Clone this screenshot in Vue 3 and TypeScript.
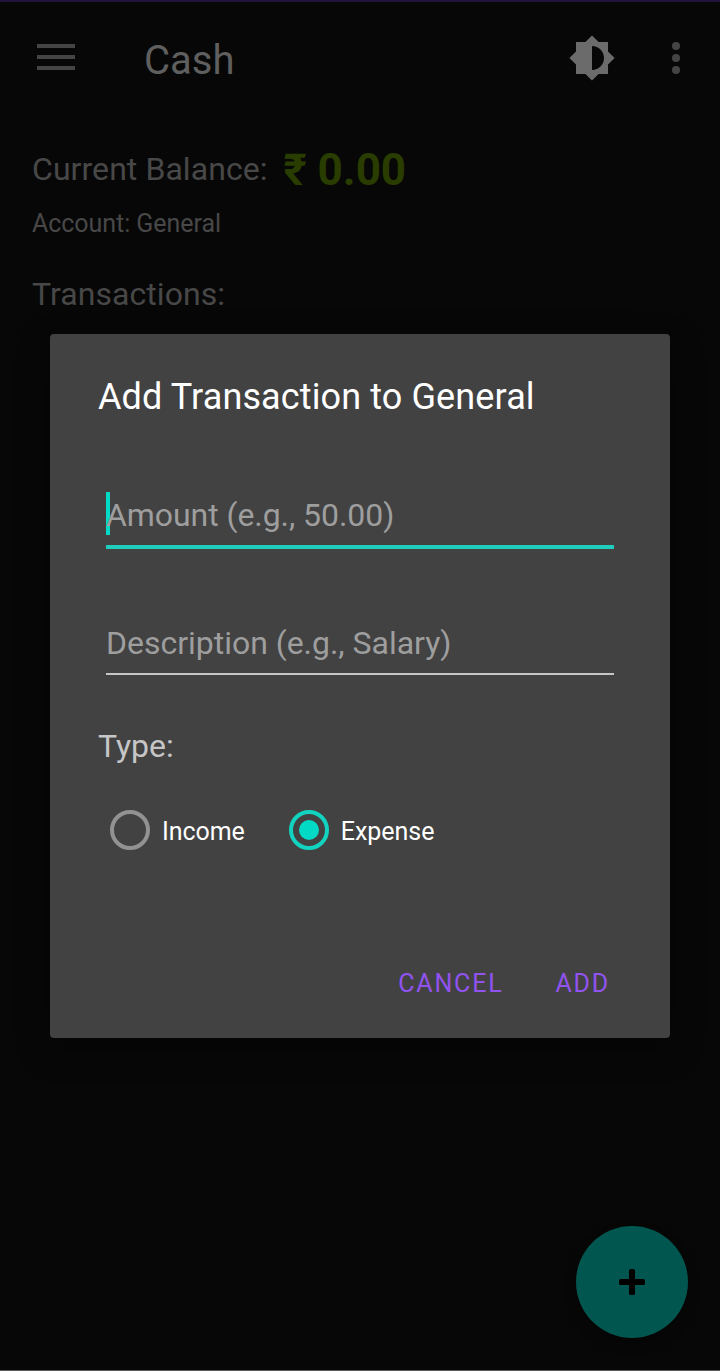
<script setup lang="ts">
import { ref } from 'vue'

type Kind = 'Income' | 'Expense'

const kinds: Kind[] = ['Income', 'Expense']
const selected = ref<Kind>('Expense')
const amount = ref('')
const description = ref('')
</script>

<template>
  <div class="screen">
    <header class="toolbar">
      <svg class="menu" width="38" height="26" viewBox="0 0 38 26">
        <path d="M0 0h38v4H0zM0 11h38v4H0zM0 22h38v4H0z" />
      </svg>
      <h1 class="title">Cash</h1>
      <svg class="theme" width="48" height="48" viewBox="0 0 24 24">
        <path d="M20 15.31L23.31 12 20 8.69V4h-4.69L12 .69 8.69 4H4v4.69L.69 12 4 15.31V20h4.69L12 23.31 15.31 20H20v-4.69zM12 18V6c3.31 0 6 2.69 6 6s-2.69 6-6 6z" />
      </svg>
      <svg class="more" width="8" height="32" viewBox="0 0 8 32">
        <circle cx="4" cy="4" r="4" />
        <circle cx="4" cy="16" r="4" />
        <circle cx="4" cy="28" r="4" />
      </svg>
    </header>

    <main class="content">
      <div class="balance">
        <span class="balance-label">Current Balance:</span>
        <strong class="balance-value">₹ 0.00</strong>
      </div>
      <p class="account">Account: General</p>
      <h2 class="section">Transactions:</h2>
    </main>

    <button class="fab" aria-label="Add">
      <svg width="26" height="26" viewBox="0 0 26 26">
        <rect x="10" y="0" width="6" height="26" rx="1.5" />
        <rect x="0" y="10" width="26" height="6" rx="1.5" />
      </svg>
    </button>

    <div class="overlay">
      <form class="dialog" @submit.prevent>
        <h2 class="dialog-title">Add Transaction to General</h2>
        <div class="field focused">
          <i class="caret"></i>
          <input v-model="amount" placeholder="Amount (e.g., 50.00)" />
        </div>
        <div class="field">
          <input v-model="description" placeholder="Description (e.g., Salary)" />
        </div>
        <p class="type">Type:</p>
        <div class="options">
          <div
            v-for="kind in kinds"
            :key="kind"
            class="option"
            :class="{ on: kind === selected }"
            @click="selected = kind"
          >
            <span class="ring"></span>
            <span class="option-label">{{ kind }}</span>
          </div>
        </div>
        <div class="actions">
          <button type="button">CANCEL</button>
          <button type="submit">ADD</button>
        </div>
      </form>
    </div>
  </div>
</template>

<style>
body {
  margin: 0;
  background: #070707;
}
</style>

<style scoped>
.screen {
  box-sizing: border-box;
  position: relative;
  width: 720px;
  height: 1371px;
  overflow: hidden;
  background: #070707;
  border-top: 2px solid #20133d;
  border-bottom: 1px solid #5c585a;
  font-family: Roboto, "Liberation Sans", sans-serif;
}

h1,
h2,
p {
  margin: 0;
  font-weight: 400;
}

button {
  padding: 0;
  border: 0;
  background: none;
  font-family: inherit;
}

svg {
  display: block;
}

.toolbar {
  display: flex;
  align-items: center;
  box-sizing: border-box;
  height: 112px;
  padding: 0 40px 0 37px;
}

.menu {
  margin-right: 69px;
  margin-top: -2px;
  fill: #444;
}

.title {
  flex: 1;
  padding-top: 6px;
  color: #5f5f5f;
  font-size: 40px;
  line-height: 48px;
}

.theme {
  margin-right: 56px;
  fill: #6b6b6b;
}

.more {
  fill: #444;
}

.content {
  padding: 29px 32px 0;
  color: #484848;
}

.balance {
  display: flex;
  align-items: center;
  gap: 16px;
  height: 52px;
}

.balance-label {
  font-size: 32px;
  letter-spacing: 0.06px;
}

.balance-value {
  padding-top: 2px;
  color: #2a3d00;
  font-size: 44px;
  font-weight: 700;
}

.account {
  margin-top: 13px;
  font-size: 25px;
  line-height: 32px;
  letter-spacing: -0.05px;
}

.section {
  margin-top: 34px;
  font-size: 32px;
  line-height: 40px;
  letter-spacing: 0.06px;
}

.fab {
  position: absolute;
  right: 32px;
  bottom: 32px;
  display: flex;
  align-items: center;
  justify-content: center;
  width: 112px;
  height: 112px;
  border-radius: 50%;
  background: #01574f;
  box-shadow: 0 6px 12px rgba(0, 0, 0, 0.3);
}

.overlay {
  position: absolute;
  inset: 0;
  padding: 332px 50px 0;
}

.dialog {
  box-sizing: border-box;
  height: 704px;
  padding: 39px 48px 0;
  border-radius: 4px;
  background: #424242;
  box-shadow: 0 12px 32px rgba(0, 0, 0, 0.35);
}

.dialog-title {
  color: #fff;
  font-size: 36px;
  line-height: 48px;
  letter-spacing: 0.12px;
}

.field {
  position: relative;
  box-sizing: border-box;
  height: 54px;
  margin: 72px 8px 0;
  border-bottom: 2px solid #c6c6c6;
}

.field.focused {
  height: 56px;
  border-bottom: 4px solid #20cdbc;
}

.field input {
  display: block;
  width: 100%;
  height: 44px;
  padding: 0;
  border: 0;
  outline: 0;
  background: none;
  color: #fff;
  font: 32px/44px Roboto, "Liberation Sans", sans-serif;
  letter-spacing: -0.02px;
}

.field input::placeholder {
  color: #9e9e9e;
  opacity: 1;
}

.field.focused input {
  position: relative;
  letter-spacing: -0.06px;
}

.caret {
  position: absolute;
  left: 0;
  top: -1px;
  width: 4px;
  height: 43px;
  background: #03dac5;
}

.type {
  margin-top: 51px;
  color: #c6c6c6;
  font-size: 32px;
  line-height: 40px;
}

.options {
  display: flex;
  gap: 44px;
  margin: 44px 12px 0;
}

.option {
  display: flex;
  align-items: center;
  gap: 12px;
  height: 40px;
}

.ring {
  display: flex;
  align-items: center;
  justify-content: center;
  box-sizing: border-box;
  width: 40px;
  height: 40px;
  border: 4px solid #929292;
  border-radius: 50%;
}

.on .ring {
  border-color: #12d3c0;
}

.on .ring::after {
  content: "";
  width: 20px;
  height: 20px;
  border-radius: 50%;
  background: #03dac5;
}

.option-label {
  padding-top: 4px;
  color: #fff;
  font-size: 25px;
  line-height: 32px;
  letter-spacing: -0.05px;
}

.actions {
  display: flex;
  justify-content: flex-end;
  gap: 52px;
  margin: 118px 12px 0;
}

.actions button {
  color: #9153f0;
  font-size: 25px;
  line-height: 32px;
  letter-spacing: 1.8px;
}
</style>
